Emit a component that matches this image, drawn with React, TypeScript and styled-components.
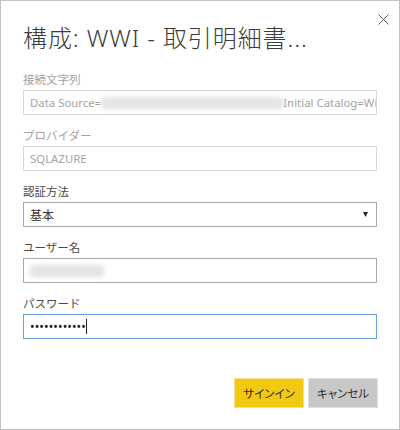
import React from "react";
import styled, { createGlobalStyle } from "styled-components";

const Global = createGlobalStyle`
  html, body { margin: 0; padding: 0; background: #fff; }
  body { font-family: "Noto Sans", "Noto Sans CJK JP", sans-serif; }
  * { box-sizing: border-box; }
`;

const Dialog = styled.div`
  position: relative;
  width: 400px;
  height: 430px;
  border: 1px solid #c2c2c2;
  background: #fff;
  padding: 21px 22px 0 22px;
  display: flex;
  flex-direction: column;
`;

const Close = styled.button`
  position: absolute;
  top: 12px;
  right: 10px;
  width: 12px;
  height: 12px;
  padding: 0;
  border: 0;
  background: transparent;
  display: flex;
  align-items: center;
  justify-content: center;
`;

const Title = styled.h1`
  margin: 0;
  font-family: "Noto Sans", "Noto Sans CJK JP", sans-serif;
  font-weight: 300;
  font-size: 24px;
  line-height: 32px;
  letter-spacing: 0.9px;
  color: #3c3c3c;
  white-space: nowrap;
`;

const Form = styled.div`
  display: flex;
  flex-direction: column;
  gap: 12px;
  margin-top: 17px;
`;

const Field = styled.div`
  display: flex;
  flex-direction: column;
  gap: 3px;
`;

const Label = styled.label<{ $disabled?: boolean }>`
  font-family: "Noto Sans CJK JP", sans-serif;
  font-size: 11.5px;
  line-height: 16px;
  color: ${(p) => (p.$disabled ? "#a3a3a3" : "#4a4a4a")};
`;

const Box = styled.div<{ $disabled?: boolean; $focused?: boolean }>`
  height: 25px;
  width: 100%;
  border: 1px solid
    ${(p) => (p.$focused ? "#6f9fe3" : p.$disabled ? "#dadada" : "#a8a8a8")};
  padding: 0 6px;
  display: flex;
  align-items: center;
  overflow: hidden;
  white-space: nowrap;
  font-family: "Noto Sans", "Noto Sans CJK JP", sans-serif;
  font-size: 11.4px;
  color: ${(p) => (p.$disabled ? "#a3a3a3" : "#333")};
  background: #fff;
`;

const Blurred = styled.span<{ $w: number }>`
  display: inline-block;
  width: ${(p) => p.$w}px;
  height: 12px;
  background: #e4e4e4;
  filter: blur(2px);
  border-radius: 3px;
  flex: none;
`;

const SelectBox = styled(Box)`
  justify-content: space-between;
  padding-right: 8px;
  font-family: "Noto Sans CJK JP", sans-serif;
  font-size: 12px;
  cursor: pointer;
`;

const Dots = styled.span`
  font-size: 12px;
  letter-spacing: 0.15px;
  color: #1a1a1a;
`;

const Caret = styled.span`
  display: inline-block;
  width: 1px;
  height: 15px;
  background: #222;
`;

const Actions = styled.div`
  display: flex;
  justify-content: flex-end;
  gap: 4px;
  margin-top: 39px;
  margin-right: -1px;
`;

const Button = styled.button<{ $primary?: boolean }>`
  width: 70px;
  height: 30px;
  border: 1px solid ${(p) => (p.$primary ? "#f7e08a" : "#dedede")};
  background: ${(p) => (p.$primary ? "#f2c811" : "#c8c8c8")};
  color: #2e2e2e;
  font-family: "Noto Sans CJK JP", sans-serif;
  font-feature-settings: "palt";
  font-size: 11.5px;
  font-weight: 400;
  padding: 0;
`;

export default function App() {
  return (
    <>
      <Global />
      <Dialog>
        <Close aria-label="閉じる">
          <svg width="11" height="11" viewBox="0 0 11 11">
            <path d="M0.5 0.5 L10.5 10.5 M10.5 0.5 L0.5 10.5" stroke="#5a5a5a" strokeWidth="1" fill="none" />
          </svg>
        </Close>
        <Title>構成: WWI - 取引明細書...</Title>
        <Form>
          <Field>
            <Label $disabled>接続文字列</Label>
            <Box $disabled>
              Data Source=<Blurred $w={182} />Initial Catalog=WideWorldImporters
            </Box>
          </Field>
          <Field>
            <Label $disabled>プロバイダー</Label>
            <Box $disabled>SQLAZURE</Box>
          </Field>
          <Field>
            <Label>認証方法</Label>
            <SelectBox>
              <span>基本</span>
              <svg width="5" height="5" viewBox="0 0 5 5">
                <path d="M0 0 L5 0 L2.5 5 Z" fill="#222" />
              </svg>
            </SelectBox>
          </Field>
          <Field>
            <Label>ユーザー名</Label>
            <Box>
              <Blurred $w={74} />
            </Box>
          </Field>
          <Field>
            <Label>パスワード</Label>
            <Box $focused>
              <Dots>••••••••••••</Dots>
              <Caret />
            </Box>
          </Field>
        </Form>
        <Actions>
          <Button $primary>サインイン</Button>
          <Button>キャンセル</Button>
        </Actions>
      </Dialog>
    </>
  );
}
